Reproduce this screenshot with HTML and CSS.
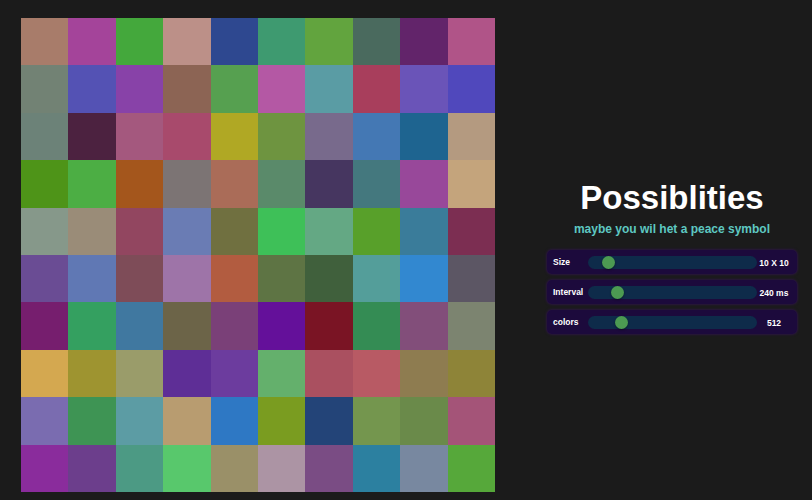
FILE: index.html
```html
<!DOCTYPE html>
<html>
<head>
<meta charset="utf-8">
<link rel="stylesheet" href="styles.css">
</head>
<body>
<div class="board">
<div class="cell" style="background:#a87c6a"></div><div class="cell" style="background:#a4449a"></div><div class="cell" style="background:#44a83c"></div><div class="cell" style="background:#bc9088"></div><div class="cell" style="background:#2e4890"></div><div class="cell" style="background:#3e9a70"></div><div class="cell" style="background:#62a43e"></div><div class="cell" style="background:#4a6a5e"></div><div class="cell" style="background:#62246a"></div><div class="cell" style="background:#b05488"></div>
<div class="cell" style="background:#728274"></div><div class="cell" style="background:#5452b4"></div><div class="cell" style="background:#8842a8"></div><div class="cell" style="background:#8c6454"></div><div class="cell" style="background:#56a050"></div><div class="cell" style="background:#b458a4"></div><div class="cell" style="background:#5a9ca4"></div><div class="cell" style="background:#a83e5c"></div><div class="cell" style="background:#6a54b8"></div><div class="cell" style="background:#5048bc"></div>
<div class="cell" style="background:#6c8278"></div><div class="cell" style="background:#4c2240"></div><div class="cell" style="background:#a4587e"></div><div class="cell" style="background:#a84a6c"></div><div class="cell" style="background:#b0a824"></div><div class="cell" style="background:#6e9440"></div><div class="cell" style="background:#786a8c"></div><div class="cell" style="background:#4478b4"></div><div class="cell" style="background:#1e6490"></div><div class="cell" style="background:#b49a80"></div>
<div class="cell" style="background:#4e9418"></div><div class="cell" style="background:#4cae44"></div><div class="cell" style="background:#a4561c"></div><div class="cell" style="background:#7c7474"></div><div class="cell" style="background:#aa6c58"></div><div class="cell" style="background:#5a8a6a"></div><div class="cell" style="background:#463660"></div><div class="cell" style="background:#44787e"></div><div class="cell" style="background:#98489a"></div><div class="cell" style="background:#c4a47c"></div>
<div class="cell" style="background:#86988a"></div><div class="cell" style="background:#9a8c78"></div><div class="cell" style="background:#924660"></div><div class="cell" style="background:#6a7cb4"></div><div class="cell" style="background:#707040"></div><div class="cell" style="background:#3ec058"></div><div class="cell" style="background:#64a884"></div><div class="cell" style="background:#58a02a"></div><div class="cell" style="background:#3a7c9a"></div><div class="cell" style="background:#7c2e52"></div>
<div class="cell" style="background:#6a4c94"></div><div class="cell" style="background:#6078b4"></div><div class="cell" style="background:#7e4c58"></div><div class="cell" style="background:#9e74a8"></div><div class="cell" style="background:#b25c40"></div><div class="cell" style="background:#5e7444"></div><div class="cell" style="background:#40603c"></div><div class="cell" style="background:#549e9a"></div><div class="cell" style="background:#3288d0"></div><div class="cell" style="background:#5c5664"></div>
<div class="cell" style="background:#761e6e"></div><div class="cell" style="background:#34a060"></div><div class="cell" style="background:#4078a0"></div><div class="cell" style="background:#6c6448"></div><div class="cell" style="background:#7a4078"></div><div class="cell" style="background:#64109a"></div><div class="cell" style="background:#7a1424"></div><div class="cell" style="background:#348c54"></div><div class="cell" style="background:#824e7a"></div><div class="cell" style="background:#7c8470"></div>
<div class="cell" style="background:#d4a850"></div><div class="cell" style="background:#9e9430"></div><div class="cell" style="background:#9a9c6a"></div><div class="cell" style="background:#5e2e96"></div><div class="cell" style="background:#6c3c9e"></div><div class="cell" style="background:#64b06c"></div><div class="cell" style="background:#aa5060"></div><div class="cell" style="background:#b85a64"></div><div class="cell" style="background:#8e7c50"></div><div class="cell" style="background:#8e8438"></div>
<div class="cell" style="background:#7a6cb0"></div><div class="cell" style="background:#3e9454"></div><div class="cell" style="background:#5c9ca4"></div><div class="cell" style="background:#b89c70"></div><div class="cell" style="background:#2e78c4"></div><div class="cell" style="background:#7a9c20"></div><div class="cell" style="background:#234478"></div><div class="cell" style="background:#74964e"></div><div class="cell" style="background:#6a8a4a"></div><div class="cell" style="background:#a45478"></div>
<div class="cell" style="background:#8a2c9c"></div><div class="cell" style="background:#6c3e8c"></div><div class="cell" style="background:#4c9a84"></div><div class="cell" style="background:#58c86c"></div><div class="cell" style="background:#9a9068"></div><div class="cell" style="background:#ac94a4"></div><div class="cell" style="background:#7a4c84"></div><div class="cell" style="background:#2c80a0"></div><div class="cell" style="background:#7888a0"></div><div class="cell" style="background:#56a83a"></div>
</div>
<div class="panel">
  <h1 class="title">Possiblities</h1>
  <p class="subtitle">maybe you wil het a peace symbol</p>
  <div class="controls">
    <label class="control">
      <span class="label">Size</span>
      <input class="slider" type="range" min="0" max="1000" value="87">
      <span class="value">10 X 10</span>
    </label>
    <label class="control">
      <span class="label">Interval</span>
      <input class="slider" type="range" min="0" max="1000" value="150">
      <span class="value">240 ms</span>
    </label>
    <label class="control">
      <span class="label">colors</span>
      <input class="slider" type="range" min="0" max="1000" value="176">
      <span class="value">512</span>
    </label>
  </div>
</div>
</body>
</html>
```
FILE: styles.css
```css
html, body {
  margin: 0;
  background: #1b1b1b;
}
body {
  display: flex;
  align-items: flex-start;
  padding: 18px 0 0 21px;
  font-family: "Liberation Sans", Arial, sans-serif;
  color: #fff;
}
.board {
  width: 474px;
  height: 474px;
  display: grid;
  grid-template-columns: repeat(10, 1fr);
  grid-template-rows: repeat(10, 1fr);
  flex: none;
}
.panel {
  margin-left: 52px;
  margin-top: 163px;
  width: 250px;
  display: flex;
  flex-direction: column;
  align-items: center;
}
.title {
  margin: 0;
  font-size: 33px;
  line-height: 33px;
  font-weight: bold;
  color: #fff;
}
.subtitle {
  margin: 9px 0 0;
  font-size: 12px;
  line-height: 12px;
  font-weight: bold;
  color: #5ec8c2;
}
.controls {
  margin-top: 15px;
  width: 250px;
  display: flex;
  flex-direction: column;
  gap: 6px;
}
.control {
  height: 24px;
  display: flex;
  align-items: center;
  padding: 0 6px;
  border-radius: 5px;
  background: #1c0a3c;
  box-shadow: 0 0 3px rgba(70, 14, 130, 0.7);
}
.label {
  width: 35px;
  font-size: 8.5px;
  font-weight: bold;
  color: #fff;
}
.value {
  width: 34px;
  text-align: center;
  font-size: 8.5px;
  font-weight: bold;
  color: #fff;
  padding-top: 2px;
}
.slider {
  -webkit-appearance: none;
  appearance: none;
  margin: 0;
  width: 169px;
  height: 13px;
  background: transparent;
}
.slider::-webkit-slider-runnable-track {
  height: 13px;
  border-radius: 7px;
  background: #0e2b4a;
}
.slider::-webkit-slider-thumb {
  -webkit-appearance: none;
  appearance: none;
  width: 13px;
  height: 13px;
  border-radius: 50%;
  background: #4c9a52;
  box-shadow: 0 1px 2px rgba(0, 0, 0, 0.4);
}
```
